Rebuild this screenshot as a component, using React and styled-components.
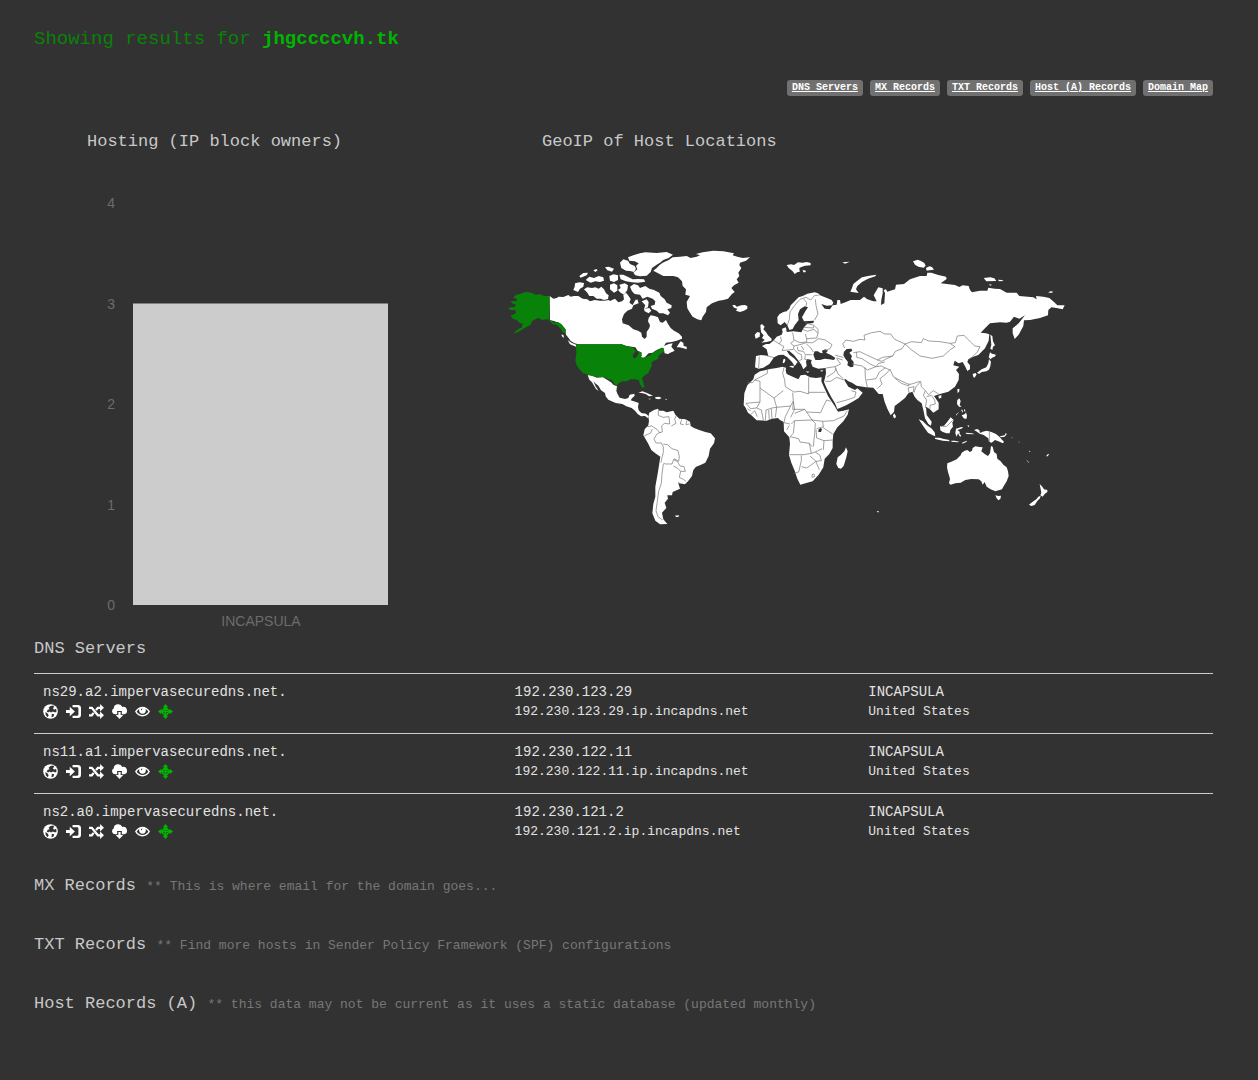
import styled, { createGlobalStyle } from "styled-components";

const colors = {
    background: "#323232",
    text: "#c8c8c8",
    row: "#e2e2e2",
    muted: "#777777",
    axis: "#6c6c6c",
    badge: "#707070",
    bar: "#cccccc",
    green: "#00b400",
    highlight: "#088208",
    land: "#ffffff",
    border: "#707070",
};

const links = [
    { label: "DNS Servers", href: "#dns" },
    { label: "MX Records", href: "#mx" },
    { label: "TXT Records", href: "#txt" },
    { label: "Host (A) Records", href: "#hosta" },
    { label: "Domain Map", href: "#map" },
];

const servers = [
    { host: "ns29.a2.impervasecuredns.net.", ip: "192.230.123.29", reverse: "192.230.123.29.ip.incapdns.net", owner: "INCAPSULA", country: "United States" },
    { host: "ns11.a1.impervasecuredns.net.", ip: "192.230.122.11", reverse: "192.230.122.11.ip.incapdns.net", owner: "INCAPSULA", country: "United States" },
    { host: "ns2.a0.impervasecuredns.net.", ip: "192.230.121.2", reverse: "192.230.121.2.ip.incapdns.net", owner: "INCAPSULA", country: "United States" },
];

const records = [
    { id: "mx", title: "MX Records", note: "** This is where email for the domain goes..." },
    { id: "txt", title: "TXT Records", note: "** Find more hosts in Sender Policy Framework (SPF) configurations" },
    { id: "hosta", title: "Host Records (A)", note: "** this data may not be current as it uses a static database (updated monthly)" },
];

const hosting = [{ name: "INCAPSULA", count: 3 }];
const ticks = [0, 1, 2, 3, 4];

export default function App() {
    return (
        <>
            <GlobalStyle />
            <Page>
                <Title>
                    Showing results for <strong>jhgccccvh.tk</strong>
                </Title>
                <Badges>
                    {links.map(({ label, href }) => (
                        <Badge key={href} href={href}>{label}</Badge>
                    ))}
                </Badges>
                <Charts>
                    <section>
                        <ChartTitle>Hosting (IP block owners)</ChartTitle>
                        <HostingChart />
                    </section>
                    <section id="map">
                        <ChartTitle>GeoIP of Host Locations</ChartTitle>
                        <WorldMap />
                    </section>
                </Charts>
                <SectionTitle id="dns">DNS Servers</SectionTitle>
                <Table>
                    <tbody>
                        {servers.map((server) => (
                            <tr key={server.host}>
                                <Cell $width="40%">
                                    {server.host}
                                    <HostActions />
                                </Cell>
                                <Cell $width="30%">
                                    {server.ip}
                                    <Small>{server.reverse}</Small>
                                </Cell>
                                <Cell $width="30%">
                                    {server.owner}
                                    <Small>{server.country}</Small>
                                </Cell>
                            </tr>
                        ))}
                    </tbody>
                </Table>
                {records.map(({ id, title, note }) => (
                    <Record key={id} id={id}>
                        <SectionTitle>
                            {title} <Note>{note}</Note>
                        </SectionTitle>
                    </Record>
                ))}
            </Page>
        </>
    );
}

function HostingChart() {
    const baseline = 452;
    const step = 100.5;

    return (
        <Drawing viewBox="0 0 455 485" role="img" aria-label="Hosting chart">
            {ticks.map((tick) => (
                <AxisLabel key={tick} x="81" y={baseline + 5 - tick * step} textAnchor="end">{tick}</AxisLabel>
            ))}
            {hosting.map(({ name, count }) => (
                <g key={name}>
                    <rect x="99" y={baseline - count * step} width="255" height={count * step} fill={colors.bar} />
                    <AxisLabel x="227" y="473" textAnchor="middle">{name}</AxisLabel>
                </g>
            ))}
        </Drawing>
    );
}

function HostActions() {
    return (
        <Actions>
            <IconButton type="button" aria-label="HTTP headers">
                <svg viewBox="0 0 16 16">
                    <circle cx="8" cy="8" r="7.8" />
                    <path fill={colors.background} d="M8 2 11 1.500 12 3l-1.500 1.500L12 6l2-1 .5 3-1.500 1-2.500-1L8.500 9 7 8 5.500 9 4 8l1-2 2-.5L6 4zM2.500 8.500 5 10l1 2-1 2-2-2zM9.500 10.500l2.500.5-1 2.500-2 .5z" />
                </svg>
            </IconButton>
            <IconButton type="button" aria-label="Port scan">
                <svg viewBox="0 0 16 16">
                    <path d="M0 6.300h4V3l5.500 5L4 13V9.700H0z" />
                    <path d="M7 1h5.500A3.500 3.500 0 0 1 16 4.500v7a3.500 3.500 0 0 1-3.500 3.500H7v-2.500h5a1.200 1.200 0 0 0 1.200-1.200V4.700A1.200 1.200 0 0 0 12 3.500H7z" />
                </svg>
            </IconButton>
            <IconButton type="button" aria-label="Shared DNS servers">
                <svg viewBox="0 0 16 16">
                    <path fill="none" stroke="currentColor" strokeWidth="2.400" d="M0 4h3l6.500 8H13M0 12h3l2-2.500M7.500 6.500 9.500 4H13" />
                    <path d="M11.800 0 16 4l-4.200 4zM11.800 8 16 12l-4.200 4z" />
                </svg>
            </IconButton>
            <IconButton type="button" aria-label="Download zone">
                <svg viewBox="0 0 16 16">
                    <path d="M3.300 11A3.300 3.300 0 0 1 1.800 4.800 4.800 4.800 0 0 1 11 3.200 4 4 0 0 1 13 11h-2.500V7.500h-5V11z" />
                    <path d="M6.800 8.500h2.400v3.300H12L8 16l-4-4.200h2.800z" />
                </svg>
            </IconButton>
            <IconButton type="button" aria-label="Banner search">
                <svg viewBox="0 0 16 16">
                    <path fillRule="evenodd" d="M0 8C2 4.500 5 2.800 8 2.800s6 1.700 8 5.200c-2 3.500-5 5.200-8 5.200S2 11.500 0 8zm1.800 0c1.400 2.300 3.500 3.700 6.200 3.700s4.800-1.400 6.200-3.700c-.7-1.200-1.600-2.100-2.700-2.800.6 3.300-1 5.100-3.500 5.100S3.900 8.500 4.500 5.200C3.400 5.900 2.500 6.800 1.800 8z" />
                    <path fill={colors.background} d="M6.200 5.200 8 4.800 7 7z" />
                </svg>
            </IconButton>
            <IconButton type="button" aria-label="Traceroute" $color={colors.green}>
                <svg viewBox="0 0 16 16">
                    <path d="m8 0 3 3.500H5zM16 8l-3.500 3V5zM8 16l-3-3.500h6zM0 8l3.500-3v6z" />
                    <path fill="none" stroke="currentColor" strokeWidth="1.600" d="M8 3v10M3 8h10M8 3.500 12.500 8 8 12.500 3.500 8z" />
                </svg>
            </IconButton>
        </Actions>
    );
}

/* Every region is drawn on its own grid, three units to one map unit */
function WorldMap() {
    return (
        <Drawing viewBox="489 153 724 485" role="img" aria-label="World map, United States highlighted">
            <Region transform="translate(500 240) scale(0.33333)">
                {/* Canada */}
                <path d="M149 168 160 176 170 174 176 170 190 171 205 165 212 170 222 168 235 168 248 176 262 178 270 184 284 180 300 182 314 182 326 180 330 183 345 176 355 187 366 184 372 178 370 165 378 158 386 168 392 178 388 188 398 195 404 184 412 178 416 190 400 196 396 206 382 212 372 222 366 238 368 250 386 256 400 268 414 272 424 278 426 290 434 297 440 290 440 276 448 264 450 256 444 244 446 234 452 226 464 228 474 232 480 246 488 248 498 240 504 252 512 264 522 272 536 280 546 290 546 296 530 302 515 306 498 308 492 318 506 312 518 310 514 320 524 332 512 336 504 342 494 340 490 324 478 326 466 332 458 338 446 340 432 354 418 350 426 338 414 334 406 322 396 320 380 318 365 313 235 313 224 310 212 303 206 294 198 284 196 268 186 256 176 248 164 244 150 240z" />
                <path d="M536 312 542 304 550 308 551 318 560 320 560 328 550 325 538 322 530 322zM500 338 520 330 522 333 504 341zM184 284 190 284 192 294 187 290zM203 300 214 308 230 315 228 320 210 313z" />
                {/* Arctic islands */}
                <path d="M225 130 238 127 252 129 250 140 240 146 234 156 220 150 224 140zM252 148 262 142 276 144 286 142 296 146 304 140 312 148 318 160 326 166 324 177 312 180 302 176 290 176 280 168 268 168 262 158zM238 108 250 99 264 98 260 106 242 113zM257 120 268 110 282 114 296 108 310 112 312 122 300 126 286 124 272 128zM280 91 289 87 293 91 286 96zM315 82 326 80 342 86 336 95 322 91zM328 108 340 103 354 106 354 120 342 126 330 122zM358 104 370 104 386 112 398 118 416 117 432 118 436 125 414 128 396 127 378 124 362 118zM360 68 370 58 384 62 390 72 404 78 408 86 402 96 390 93 378 92 364 84zM358 134 374 130 384 136 382 150 372 164 362 158 354 150 362 144zM330 134 342 130 352 136 352 152 342 158 330 148z" />
                <path d="M384 52 400 46 420 40 436 37 470 39 500 36 519 44 506 54 490 60 480 68 470 74 456 84 452 96 440 107 420 109 406 106 400 98 412 88 408 78 416 70 404 64 388 62z" />
                <path d="M390 140 402 132 414 136 420 144 436 138 448 146 462 150 478 158 482 168 494 178 500 188 515 196 514 204 502 208 510 218 504 226 490 220 478 220 470 212 456 206 452 198 464 194 466 184 458 176 442 170 428 176 420 164 404 162 396 154zM425 184 440 178 446 186 444 202 432 206 436 196zM405 178 414 188 408 190zM432 206 448 204 454 212 446 220 434 214z" />
            </Region>
            <Region transform="translate(500 240) scale(0.33333)" $highlighted>
                {/* Alaska */}
                <path d="M148 168 130 167 120 162 108 164 94 158 78 155 62 161 48 165 40 172 52 178 48 184 33 183 36 190 48 194 44 201 25 203 30 210 46 210 48 219 32 228 38 236 50 240 60 250 68 250 66 262 54 268 42 278 42 281 58 274 74 264 92 254 96 244 106 238 116 234 126 240 140 238 150 240 162 248 174 246 184 252 192 262 198 270 196 280 188 276 180 264 170 254 158 252 148 243z" />
                {/* Contiguous states */}
                <path d="M228 314 240 313 365 313 378 319 398 322 408 334 398 344 400 354 408 354 416 340 414 332 422 336 426 346 422 354 438 351 452 344 462 336 476 330 484 323 490 323 493 334 482 342 474 350 476 356 462 362 454 368 456 378 450 388 446 398 434 406 426 414 430 428 433 440 428 444 420 432 416 420 404 418 392 418 380 424 366 424 356 430 350 438 342 430 336 420 324 418 314 412 296 412 268 406 250 400 240 390 230 376 226 360 229 340z" />
            </Region>
            <Region transform="translate(500 370) scale(0.33333)">
                <path d="M263 15l16 4 12 4 18-1 12 7 12 8 8 8 10 4-2 14 4 10 6 10 16 4 10-3 4-10 14-3 1 6-8 8-4 6 14 4 10 4-2 12 2 10 8 8 14 2 8 8-3 5-8-6-12 1-10-7-8-10-10-8-16-5-12-7-20-3-22-10-8-10-2-10-12-8-8-14-10-8-5-6 6 14 10 16-8-6-12-20-8-8z" />
                <path d="M415 68l12-4 12 4 10 5 10 4-12 2-10-7-12-3zM465 82l12-2 8 4-8 4-10-2zM446 86l6 0 0 2-6 0zM496 86l5 2-3 3z" />
                <path d="M445 140 448 128 462 120 474 116 478 122 490 122 500 127 520 122 526 134 538 146 556 148 570 155 572 168 582 174 600 181 616 186 632 190 645 205 642 220 630 236 626 258 616 278 600 286 588 290 580 300 576 318 564 334 555 343 538 340 534 336 540 356 518 366 516 376 502 376 504 386 494 398 499 414 486 428 490 448 502 462 480 463 466 452 457 430 460 402 466 380 466 350 474 305 481 260 466 250 454 240 444 220 430 196 434 178 445 166 447 152z" />
                <path d="M524 437l12-1 2 3-8 3z" />
                <Border d="M475 118l0 18 14 6 18-2 2 22-16-2-8 8 2 18-8 2-8-10-10-6-6-4-14 2M480 187l-10 6-8 14 6 12 16 0 6 12 0 16-4 16-3 15M457 177l-5 12-14 6-6 4M528 138l-4 10 4 12-14 8M545 148l-4 14 10 2M560 152l-2 12 10-2M490 222l12 2 14 12 18 6 4 18-2 14-14-8-6 16-20 0-6-3M522 270l10 4 8 14 12 2 4 14-14 0-10-10-12-6M542 304l-4 18 12 6 8 6M490 282l-4 30-2 28-8 24-4 30-4 28 6 18 14 10" />
            </Region>
            <Region transform="translate(660 240) scale(0.33333)">
                {/* Greenland, Iceland, Svalbard, Novaya Zemlya */}
                <path d="M-20 92-10 84-2 76 8 68 26 60 38 52 60 50 80 48 92 54 110 50 120 46 108 42 128 37 160 32 190 34 222 40 218 46 232 50 248 54 270 52 258 62 240 68 238 76 244 84 235 98 238 108 230 118 236 128 222 136 214 144 224 156 216 162 204 176 190 180 176 182 156 190 140 202 138 216 128 230 124 241 112 238 98 230 90 218 82 205 80 186 90 168 76 164 78 148 68 138 66 124 54 112 40 108 10 108z" />
                <path d="M217 195l8 0 5 5 14-4 10-1 8 3 0 8-10 6-12 4-12-4 4-6-10-3zM380 75l14-2 8 2 12-8 14 1 12-2 12 3 0 7-16 1-10 3-8 4 1 12-6 0-9 6-6-8-12-10zM428 90l10 2-2 5-6 0zM547 67l10-1 12-1-14 6zM571 155 576 144 580 132 592 122 606 112 628 107 649 104 646 109 624 116 606 126 592 138 588 148 596 159z" />
                {/* British Isles */}
                <path d="M302 268 301 256 306 252 314 260 310 268 318 276 324 286 335 296 334 302 320 306 304 308 314 300 306 294 311 286 304 278zM284 284 292 276 300 278 299 290 287 296z" />
                {/* Africa */}
                <path d="M308 392 330 387 350 384 368 380 378 383 377 392 380 402 398 410 415 418 422 406 436 404 450 412 468 414 485 412 484 424 492 442 504 468 516 486 524 498 534 515 550 512 567 508 563 524 550 544 532 562 520 582 518 603 518 624 508 642 494 656 490 682 476 704 458 724 436 730 421 734 412 716 404 692 394 668 387 645 390 612 388 592 372 574 371 546 360 540 354 534 336 536 320 542 290 541 274 526 264 518 256 502 251 496 253 460 262 436 280 418 284 404 300 394z" />
                <path d="M558 622l5 12-4 18-8 26-8 8-8-2-6-12 4-20 10-8 10-10zM702 520l6 8-2 6-4 1-3-8z" />
                {/* Eurasia */}
                <path d="M353 250 352 232 358 223 370 216 380 214 388 206 392 196 404 184 416 172 428 168 442 161 464 157 474 160 480 166 495 172 515 180 520 188 516 196 500 197 484 192 494 206 510 208 518 196 530 194 532 180 540 180 542 192 558 186 572 180 600 180 612 170 622 178 640 184 650 184 641 166 655 142 668 145 668 160 664 180 663 195 673 190 675 160 671 150 678 148 682 155 705 148 708 134 732 132 750 118 780 108 800 108 802 98 814 98 835 105 858 110 860 117 842 130 885 135 898 141 908 136 926 138 930 150 936 157 960 152 982 152 985 143 1004 146 1020 147 1040 158 1070 158 1078 168 1120 172 1130 178 1128 168 1150 170 1168 174 1182 186 1192 196 1214 196 1208 208 1190 204 1174 202 1165 210 1164 226 1140 234 1110 240 1092 241 1090 258 1076 284 1064 297 1058 280 1058 265 1076 250 1095 226 1078 236 1062 230 1050 245 1040 248 1020 247 990 250 975 265 962 278 978 280 988 283 986 302 975 325 955 345 940 350 925 358 922 366 930 376 930 388 922 393 916 380 908 366 896 370 884 362 880 376 898 380 888 390 897 402 896 420 885 440 865 455 840 462 822 468 836 488 836 508 820 518 810 508 798 500 800 525 815 545 813 557 805 552 795 535 790 510 785 490 772 480 764 470 757 455 745 460 735 474 720 486 704 498 702 515 692 526 682 506 674 486 668 462 656 462 644 448 640 443 618 442 590 437 576 428 565 424 555 416 553 420 565 440 585 450 592 445 608 458 596 474 580 484 560 495 545 502 532 507 525 490 514 472 500 445 492 426 498 400 497 384 475 386 458 380 453 368 455 360 442 357 438 364 440 378 430 388 424 374 414 360 402 345 388 333 380 332 388 344 402 355 413 366 404 378 396 366 382 352 370 344 356 345 342 352 328 372 310 383 296 386 285 382 288 348 304 345 325 348 320 328 306 318 318 312 328 312 340 302 350 290 365 284 368 276 366 266 378 262 380 276 400 274 424 277 432 262 442 251 460 249 462 242 432 244 426 232 436 214 444 202 434 199 420 208 414 222 416 240 404 256 398 267 388 270 382 256 374 246 362 256z" />
                <path d="M370 358l5-2 1 6-4 8-4-2zM388 378l14-1-2 7-10-4zM437 394l12 1-6 3zM480 392l10-2-4 5z" />
            </Region>
            <Sea transform="translate(660 240) scale(0.33333)">
                <path d="M460 344 464 334 474 334 480 338 488 340 486 332 496 328 504 332 498 338 514 346 526 354 522 360 508 358 494 356 480 360 466 360zM552 335l8-8 14-1 3 6-9 6 8 10-3 8 8 10-1 14-8 2-10-6 2-10-8-10-6-10zM476 568l6-4 4 4-3 8-8 0z" />
            </Sea>
            <Region transform="translate(840 240) scale(0.33333)">
                <path d="M219 64l14-5 10 4 10 6 4 8-6 6-16-3-10-6zM258 84l10-5 8 2 6 8-14 2-8 1zM431 114l20-2 12 3 6 8-30 1zM474 119l12 1 5 3-14 1zM446 133l10 1-5 3zM624 157l8-3 8 1-6 4zM451 284l6 4 2 16 6 12-6 4-2 10-6-4 3-12zM450 337l6 4 12 3-4 6-8 3-4 5-6-6zM447 357l6 8-2 14-4 10-8 5-14 2-8 6-6-4 14-10 14-6 6-12zM398 402l8-3 4 4-6 10-4-2z" />
            </Region>
            <Region transform="translate(870 380) scale(0.33333)">
                <path d="M262 28l6-2 0 8-5 6zM205 48l9-3 0 8-7 3zM262 60l6-5 4 8-3 12 6 5-8 0-6-8zM273 88l6 4-2 6zM268 95l-10 12 1-4zM283 86l4 8-5 0zM275 106l10-4 3-5 3 10-2 10-8-2z" />
                <path d="M146 118l12 5 12 12 14 10 10 12 2 12-8-3-14-8-12-16zM194 173l14 0 14 4 16 3 0 4-20-2-22-5zM210 139l12-2 10-12 10-13 9 8-4 8 2 12-8 10-2 10-10 0-12-5-6-4zM258 146l16-5 6 2-10 5-8 2 8 6-2 4 6 8-4 2-6-10-4 10-4-10zM244 182l10 0 14 3-4 2-20-2zM276 188l14-6 0 3-12 6zM292 135l6 2-2 5zM286 158l20 2 8 3-24-1z" />
                <path d="M312 150l10-3 6 4 2 8 8-4 12-3 14 4 14 6 10 8 8 9 6 6-3 5-14-6-10-4-10 8-8-3-2-10-14-10-12-4-8-6zM390 169l14-3 4-8 2 5-6 7-12 2zM425 172l4 3-4-1zM445 184l6 4-4-1zM476 214l4-2 1 4zM468 238l8 8 0 3zM528 229l5-6 5-1-5 7z" />
                <path d="M232 250 244 245 260 238 272 226 275 218 284 212 292 210 300 216 306 212 308 204 316 199 328 201 338 202 334 214 344 222 354 228 360 220 363 198 368 200 372 216 380 222 382 236 392 244 400 254 410 262 414 274 416 288 410 304 400 320 396 328 376 334 362 328 350 320 344 306 338 314 334 304 326 298 304 297 286 300 272 308 256 310 242 314 237 310 240 296 234 276 231 262zM376 346l9 2 8-1-2 10-6 4-5-6zM509 312l8 8 5 8 10 2 0 6-8 6-6 8-7-4 3-8zM512 347l-2 8-8 8-8 12-10 3-7-4 10-8 12-8 6-8zM20 393l6 0-1 5z" />
            </Region>
            {/* Country borders */}
            <Region transform="translate(660 240) scale(0.33333)">
                <Border d="M382 256 388 238 390 216 404 196 420 178 438 172 452 180 464 166 476 166M438 200 440 188 430 176M464 240 474 222 468 196 466 178M436 248 448 252 462 256 460 264 432 262M428 268 442 274 462 268 474 280 470 294 440 296 436 282M398 278 402 300 420 308 440 306 440 296M362 290 364 302 358 312 372 320 366 332 384 330 400 328 402 318 392 310 402 302M340 300 358 312M320 347 342 353M298 350 296 384M402 318 420 314 438 308 458 308 476 296 496 300 516 314 510 326 494 332M402 328 412 338 424 344M412 320 414 332 430 334 436 344 456 344M424 318 432 330M424 344 426 358 418 362M436 346 434 358 446 360M440 312 452 324 460 336M474 280 474 268 464 258M526 346 550 352M530 354 548 360" />
                <Border d="M498 384 525 380 542 372 530 356M525 380 534 402 550 416M500 412 524 396 528 384M496 424 512 424 530 412 552 420M530 488 560 480 584 472 588 456 574 452" />
                <Border d="M372 382 368 400 374 420 376 440 402 456 420 454 446 462 446 412M446 457 496 457M322 388 322 400 296 414 284 420 278 428 262 428M300 424 300 486 258 490M300 444 342 474 370 452M284 420 300 424M258 490 272 506 290 504 300 486M262 506 272 512M272 524 284 512 292 530M290 504 304 510 310 540M316 540 318 510 336 504 350 502 342 474M326 510 328 540M334 506 336 536M350 502 392 498 400 484 398 458M350 502 346 532M392 498 376 530 372 548 390 552M400 484 404 508 392 532M400 484 398 508 434 508 440 516 482 518 490 500 500 480 512 484M404 520 434 508M440 516 456 540 488 544 520 542 552 528 562 512M394 552 404 542 456 540 466 550 464 580 460 620M388 556 380 570M404 542 400 580 390 590 416 596 420 606 448 610 456 620M468 568 470 594 492 602 518 600M488 544 490 560 470 566M488 562 518 582M492 602 490 630M448 610 454 640 432 644 388 644M454 640 466 636 486 626M424 646 424 662 416 696 402 700M424 680 440 684 452 676 468 664 450 648M468 664 484 662 480 646 466 636M468 664 478 690M456 704 462 702 464 710 456 712z" />
            </Region>
            <Region transform="translate(840 240) scale(0.33333)">
                <Border d="M14 324 8 312 18 300 40 304 60 298 75 300 72 286 95 278 120 274 134 282 152 282 164 298 195 312 215 305 244 308 250 296 266 303 300 305 330 310 345 320 332 328 310 348 276 355 240 348 215 330 195 312 186 326 166 334 158 348 128 352 112 360M330 310 346 308 352 288 372 286 386 300 404 318 420 320 412 336 398 350 384 360" />
                <Border d="M40 338 60 335 80 345 100 354 112 360 126 364 140 356 158 348M50 336 50 352 66 356 90 372 108 380 116 370 134 366M36 372 66 378 82 390 108 380 124 378 136 384 150 390M75 382 76 412 82 442M80 420 108 416 118 396 136 384M112 446 126 432 120 416 138 402 150 388 160 410 182 422 208 434 240 424M164 414 184 430 206 438 208 430M208 460 204 444 222 440 220 456M222 458 228 440 242 424 244 440 256 452 250 466 260 480 256 504M256 452 266 464 280 452 296 462M260 470 274 466 284 480 286 492 270 496 270 506" />
            </Region>
            <Region transform="translate(870 380) scale(0.33333)">
                <Border d="M358 155l0 31M212 139l18 0 18-18" />
            </Region>
        </Drawing>
    );
}

const GlobalStyle = createGlobalStyle`
    * {
        box-sizing: border-box;
    }
    body {
        margin: 0;
        background-color: ${colors.background};
        color: ${colors.text};
        font-family: "Courier New", "Liberation Mono", monospace;
    }
`

const Page = styled.main`
    padding: 24px 45px 24px 34px;
`

const Title = styled.h1`
    margin: 0;
    font-size: 19px;
    font-weight: normal;
    line-height: 30px;
    color: ${colors.highlight};

    strong {
        color: ${colors.green};
    }
`

const Badges = styled.nav`
    display: flex;
    flex-wrap: wrap;
    justify-content: flex-end;
    gap: 7px;
    margin-top: 26px;
`

const Badge = styled.a`
    padding: 0 5px;
    border-radius: 3px;
    background-color: ${colors.badge};
    color: #ffffff;
    font-size: 10px;
    font-weight: bold;
    line-height: 16px;
`

const Charts = styled.div`
    display: grid;
    grid-template-columns: minmax(0, 455fr) minmax(0, 724fr);
    margin-top: 35px;
`

const SectionTitle = styled.h2`
    margin: 0;
    font-size: 17px;
    font-weight: normal;
    line-height: 22px;
`

const ChartTitle = styled(SectionTitle)`
    padding-left: 53px;
`

const Drawing = styled.svg`
    display: block;
    width: 100%;
`

const AxisLabel = styled.text`
    fill: ${colors.axis};
    font-family: "Liberation Sans", Arial, sans-serif;
    font-size: 14px;
`

const Region = styled.g`
    fill: ${({ $highlighted }) => ($highlighted ? colors.highlight : colors.land)};
`

const Sea = styled.g`
    fill: ${colors.background};
`

const Border = styled.path`
    fill: none;
    stroke: ${colors.border};
    stroke-width: 2px;
    stroke-linejoin: round;
`

const Table = styled.table`
    width: 100%;
    margin-top: 13px;
    border-collapse: collapse;
    table-layout: fixed;
`

const Cell = styled.td`
    width: ${({ $width }) => $width};
    padding: 8px 9px 11px;
    border-top: 1px solid ${colors.bar};
    color: ${colors.row};
    font-size: 14px;
    line-height: 20px;
    vertical-align: top;
`

const Small = styled.div`
    font-size: 13px;
`

const Actions = styled.div`
    display: flex;
    align-items: center;
    gap: 8px;
    height: 18px;
`

const IconButton = styled.button`
    display: flex;
    padding: 0;
    border: none;
    background-color: transparent;
    color: ${({ $color }) => $color || "#ffffff"};
    cursor: pointer;

    svg {
        width: 15px;
        height: 15px;
        fill: currentColor;
    }
`

const Record = styled.section`
    margin-top: 22px;

    & + & {
        margin-top: 36px;
    }
`

const Note = styled.small`
    color: ${colors.muted};
    font-size: 13px;
`
